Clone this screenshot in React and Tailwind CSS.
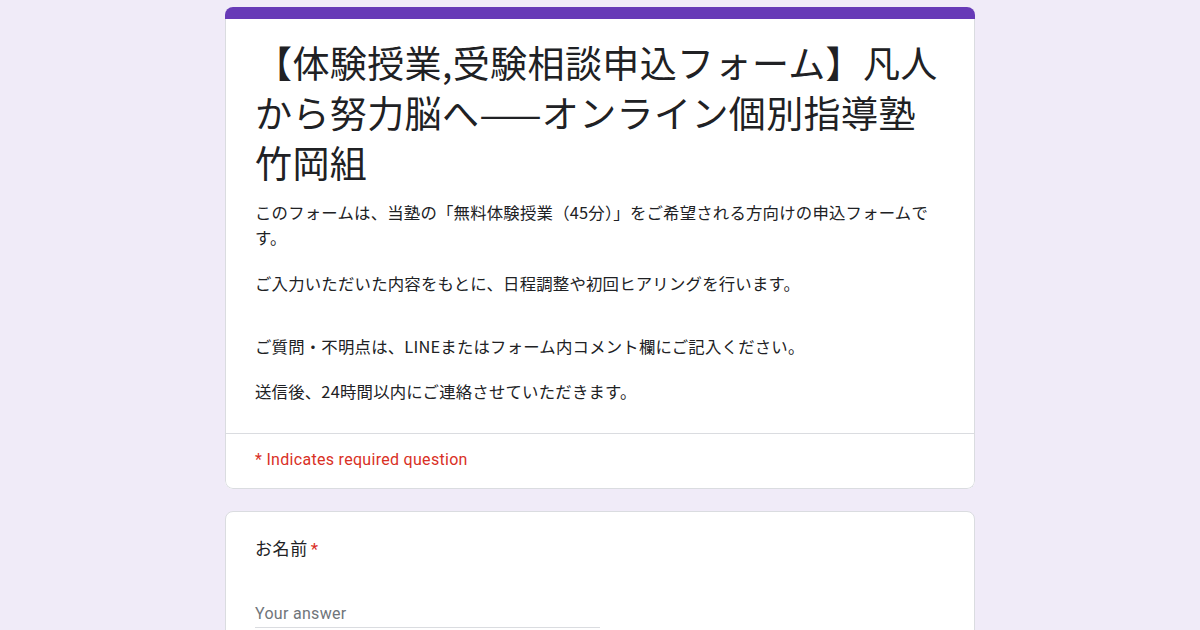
const jp = { fontFamily: "'Noto Sans CJK JP', 'Noto Sans', sans-serif" };
const roboto = { fontFamily: "Roboto, 'Noto Sans CJK JP', sans-serif" };

const paragraphs = [
  { text: 'このフォームは、当塾の「無料体験授業（45分）」をご希望される方向けの申込フォームです。', mt: 'mt-0' },
  { text: 'ご入力いただいた内容をもとに、日程調整や初回ヒアリングを行います。', mt: 'mt-[21px]' },
  { text: 'ご質問・不明点は、LINEまたはフォーム内コメント欄にご記入ください。', mt: 'mt-[38px]' },
  { text: '送信後、24時間以内にご連絡させていただきます。', mt: 'mt-[20px]' },
];

export default function App() {
  return (
    <div className="w-[1200px] h-[630px] overflow-hidden bg-[#f0ebf8]">
      <div className="w-[750px] mx-auto pt-[7px] flex flex-col gap-[22px]">
        {/* Header card */}
        <div className="rounded-lg overflow-hidden bg-white">
          <div className="h-[12px] bg-[#673ab7]" />
          <div className="border border-t-0 border-[#dadce0] rounded-b-lg">
            <div className="px-[29px] pt-[18px] pb-[29px]">
              <h1
                className="text-[37px] leading-[50px] tracking-[0.4px] text-[#202124] font-normal"
                style={jp}
              >
                【体験授業,受験相談申込フォーム】凡人から努力脳へ——オンライン個別指導塾竹岡組
              </h1>
              <div className="mt-[13px] text-[16.4px] leading-[25px] tracking-[0.2px] text-[#202124]" style={jp}>
                {paragraphs.map((p, i) => (
                  <p key={i} className={p.mt}>
                    {p.text}
                  </p>
                ))}
              </div>
            </div>
            <div className="border-t border-[#dadce0] px-[29px] pt-[14px] pb-[16px]">
              <p className="text-[16px] leading-[24px] tracking-[0.3px] text-[#d93025]" style={roboto}>
                * Indicates required question
              </p>
            </div>
          </div>
        </div>

        {/* Question card */}
        <div className="rounded-lg bg-white border border-[#dadce0] h-[200px] px-[29px] pt-[24px]">
          <div className="text-[17px] leading-[24px] tracking-[0.6px] text-[#202124]" style={jp}>
            お名前<span className="text-[#d93025] ml-[3px]" style={roboto}>*</span>
          </div>
          <div className="mt-[42px] w-[345px] border-b border-[#dadce0] pb-[3px] leading-[20px]">
            <span className="text-[16px] leading-[20px] tracking-[0.3px] text-[#70757a]" style={roboto}>
              Your answer
            </span>
          </div>
        </div>
      </div>
    </div>
  );
}
